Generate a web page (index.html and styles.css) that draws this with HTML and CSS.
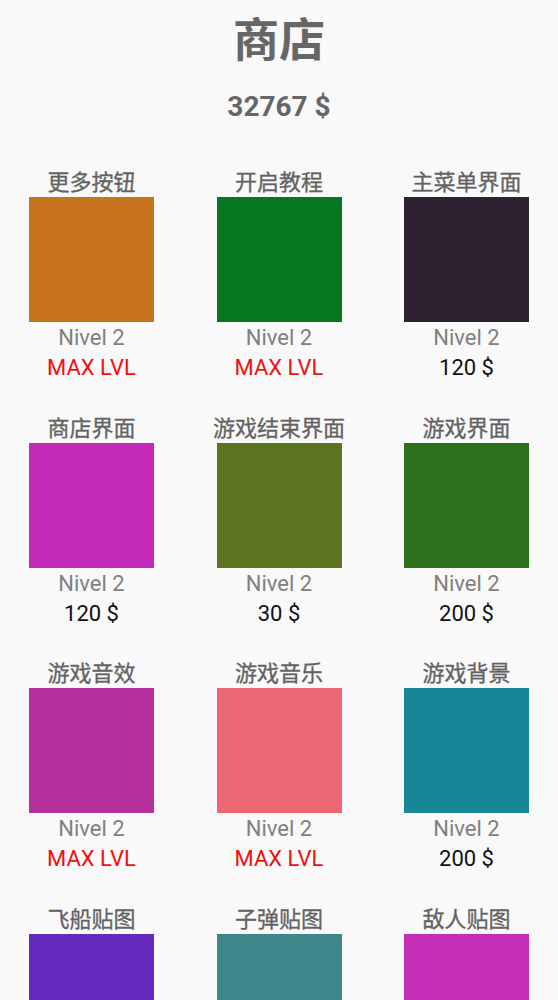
FILE: index.html
```html
<!DOCTYPE html>
<html lang="zh">
<head>
    <meta charset="UTF-8">
    <meta name="viewport" content="width=device-width, initial-scale=1.0">
    <title>商店</title>
    <link rel="stylesheet" href="styles.css">
</head>
<body>
    <header class="shop-header">
        <h1 class="shop-title">商店</h1>
        <div class="shop-money">32767 $</div>
    </header>
    <div class="shop-grid">
        <div class="item">
            <div class="item-name">更多按钮</div>
            <div class="item-swatch c-orange"></div>
            <div class="item-level">Nivel 2</div>
            <div class="item-price max">MAX LVL</div>
        </div>
        <div class="item">
            <div class="item-name">开启教程</div>
            <div class="item-swatch c-green"></div>
            <div class="item-level">Nivel 2</div>
            <div class="item-price max">MAX LVL</div>
        </div>
        <div class="item">
            <div class="item-name">主菜单界面</div>
            <div class="item-swatch c-dark"></div>
            <div class="item-level">Nivel 2</div>
            <div class="item-price">120 $</div>
        </div>
        <div class="item">
            <div class="item-name">商店界面</div>
            <div class="item-swatch c-magenta"></div>
            <div class="item-level">Nivel 2</div>
            <div class="item-price">120 $</div>
        </div>
        <div class="item">
            <div class="item-name">游戏结束界面</div>
            <div class="item-swatch c-olive"></div>
            <div class="item-level">Nivel 2</div>
            <div class="item-price">30 $</div>
        </div>
        <div class="item">
            <div class="item-name">游戏界面</div>
            <div class="item-swatch c-forest"></div>
            <div class="item-level">Nivel 2</div>
            <div class="item-price">200 $</div>
        </div>
        <div class="item">
            <div class="item-name">游戏音效</div>
            <div class="item-swatch c-purple"></div>
            <div class="item-level">Nivel 2</div>
            <div class="item-price max">MAX LVL</div>
        </div>
        <div class="item">
            <div class="item-name">游戏音乐</div>
            <div class="item-swatch c-salmon"></div>
            <div class="item-level">Nivel 2</div>
            <div class="item-price max">MAX LVL</div>
        </div>
        <div class="item">
            <div class="item-name">游戏背景</div>
            <div class="item-swatch c-teal"></div>
            <div class="item-level">Nivel 2</div>
            <div class="item-price">200 $</div>
        </div>
        <div class="item">
            <div class="item-name">飞船贴图</div>
            <div class="item-swatch c-violet"></div>
        </div>
        <div class="item">
            <div class="item-name">子弹贴图</div>
            <div class="item-swatch c-sea"></div>
        </div>
        <div class="item">
            <div class="item-name">敌人贴图</div>
            <div class="item-swatch c-pink"></div>
        </div>
    </div>
</body>
</html>
```

FILE: styles.css
```css
body {
    margin: 0;
    padding: 0;
    background-color: #f9f9f9;
    font-family: Roboto, "Noto Sans CJK SC", sans-serif;
    text-align: center;
    overflow: hidden;
}
.shop-header {
    padding-top: 8px;
    height: 161px;
}
.shop-title {
    margin: 0;
    font-size: 46px;
    line-height: 64px;
    font-weight: bold;
    color: #666666;
}
.shop-money {
    margin-top: 17px;
    font-size: 28px;
    line-height: 36px;
    font-weight: bold;
    color: #666666;
}
.shop-grid {
    display: grid;
    grid-template-columns: repeat(3, 125px);
    justify-content: space-between;
    row-gap: 31.5px;
    padding: 0 29px;
}
.item {
    display: flex;
    flex-direction: column;
    align-items: center;
}
.item-name {
    font-size: 22px;
    line-height: 28px;
    color: #626262;
    -webkit-text-stroke: 0.3px #626262;
    white-space: nowrap;
}
.item-swatch {
    width: 125px;
    height: 125px;
}
.item-level {
    padding-top: 1px;
    font-size: 22px;
    line-height: 30px;
    color: #808080;
}
.item-price {
    font-size: 22px;
    line-height: 30px;
    color: #111111;
}
.item-price.max {
    color: #f01010;
}
.c-orange { background-color: #c8741e; }
.c-green { background-color: #06761f; }
.c-dark { background-color: #2e2132; }
.c-magenta { background-color: #c42ab5; }
.c-olive { background-color: #5a7420; }
.c-forest { background-color: #2e711d; }
.c-purple { background-color: #b52f9d; }
.c-salmon { background-color: #ea6773; }
.c-teal { background-color: #158797; }
.c-violet { background-color: #632abd; }
.c-sea { background-color: #3d868a; }
.c-pink { background-color: #c42db5; }
```
